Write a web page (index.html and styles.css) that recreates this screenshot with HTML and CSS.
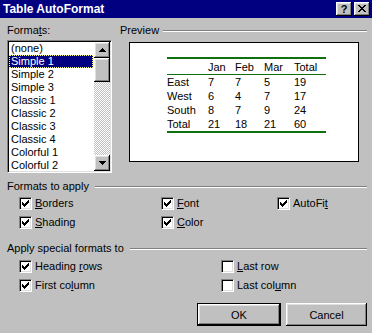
FILE: index.html
```html
<!DOCTYPE html>
<html lang="en">
<head>
  <meta charset="UTF-8">
  <title>Table AutoFormat</title>
  <link rel="stylesheet" href="styles.css">
</head>
<body>

  <div class="dialog">
    <div class="titlebar">
      <span class="title">Table AutoFormat</span>
      <div class="caption-btns">
        <span class="cbtn help">?</span>
        <span class="cbtn close">
          <svg width="8" height="7" viewBox="0 0 8 7"><path d="M0 0h2v1H0zM6 0h2v1H6zM1 1h2v1H1zM5 1h2v1H5zM2 2h4v1H2zM3 3h2v1H3zM2 4h4v1H2zM1 5h2v1H1zM5 5h2v1H5zM0 6h2v1H0zM6 6h2v1H6z"/></svg>
        </span>
      </div>
    </div>

    <div class="content">
      <div class="top">
        <div class="formats">
          <div class="label">Forma<u>t</u>s:</div>
          <div class="listbox">
            <ul class="items">
              <li>(none)</li>
              <li class="selected">Simple 1</li>
              <li>Simple 2</li>
              <li>Simple 3</li>
              <li>Classic 1</li>
              <li>Classic 2</li>
              <li>Classic 3</li>
              <li>Classic 4</li>
              <li>Colorful 1</li>
              <li>Colorful 2</li>
            </ul>
            <div class="scrollbar">
              <span class="sbtn"><svg width="7" height="4" viewBox="0 0 7 4"><path d="M3 0h1v1h1v1h1v1h1v1H0V3h1V2h1V1h1z"/></svg></span>
              <span class="thumb"></span>
              <span class="track"></span>
              <span class="sbtn"><svg width="7" height="4" viewBox="0 0 7 4"><path d="M0 0h7v1H6v1H5v1H4v1H3V3H2V2H1V1H0z"/></svg></span>
            </div>
          </div>
        </div>

        <div class="preview">
          <div class="group-title"><span>Preview</span><span class="etch"></span></div>
          <div class="preview-box">
            <table class="sample">
              <tr class="head"><td></td><td>Jan</td><td>Feb</td><td>Mar</td><td>Total</td></tr>
              <tr><td>East</td><td>7</td><td>7</td><td>5</td><td>19</td></tr>
              <tr><td>West</td><td>6</td><td>4</td><td>7</td><td>17</td></tr>
              <tr><td>South</td><td>8</td><td>7</td><td>9</td><td>24</td></tr>
              <tr><td>Total</td><td>21</td><td>18</td><td>21</td><td>60</td></tr>
            </table>
          </div>
        </div>
      </div>

      <div class="group">
        <div class="group-title"><span>Formats to apply</span><span class="etch"></span></div>
        <div class="checks apply">
          <label class="check"><span class="box on"></span><span><u>B</u>orders</span></label>
          <label class="check"><span class="box on"></span><span><u>F</u>ont</span></label>
          <label class="check"><span class="box on"></span><span>AutoFi<u>t</u></span></label>
          <label class="check"><span class="box on"></span><span><u>S</u>hading</span></label>
          <label class="check"><span class="box on"></span><span><u>C</u>olor</span></label>
        </div>
      </div>

      <div class="group special-group">
        <div class="group-title"><span>Apply special formats to</span><span class="etch"></span></div>
        <div class="checks special">
          <label class="check"><span class="box on"></span><span>Heading <u>r</u>ows</span></label>
          <label class="check"><span class="box"></span><span><u>L</u>ast row</span></label>
          <label class="check"><span class="box on"></span><span>First co<u>l</u>umn</span></label>
          <label class="check"><span class="box"></span><span>Last col<u>u</u>mn</span></label>
        </div>
      </div>

      <div class="buttons">
        <button class="btn default">OK</button>
        <button class="btn">Cancel</button>
      </div>
    </div>
  </div>

</body>
</html>
```

FILE: styles.css
```css
body {
  margin: 0;
  background: #c0c0c0;
  font-family: "Liberation Sans", Arial, sans-serif;
  font-size: 11px;
  color: #000;
}

.dialog {
  width: 372px;
  height: 333px;
  background: #c0c0c0;
  overflow: hidden;
}

/* title bar */
.titlebar {
  height: 18px;
  background: #000080;
  display: flex;
  align-items: center;
  padding-left: 3px;
  padding-right: 2px;
}

.title {
  color: #fff;
  font-weight: bold;
  font-size: 12px;
}

.caption-btns {
  margin-left: auto;
  display: flex;
  gap: 2px;
}

.cbtn,
.sbtn,
.thumb,
.btn {
  background: #c0c0c0;
  box-shadow: inset -1px -1px #000, inset 1px 1px #fff, inset -2px -2px #808080, inset 2px 2px #dfdfdf;
}

.cbtn {
  width: 16px;
  height: 14px;
  display: flex;
  align-items: center;
  justify-content: center;
  font-weight: bold;
  font-size: 11px;
  line-height: 14px;
}

.cbtn svg {
  display: block;
  margin-top: -1px;
}

/* content */
.content {
  padding: 6px 5px 0 7px;
}

.top {
  display: flex;
  gap: 8px;
}

.formats {
  width: 105px;
}

.label {
  height: 13px;
  line-height: 13px;
  margin-bottom: 3px;
}

.listbox {
  height: 133px;
  box-sizing: border-box;
  border: 1px solid;
  border-color: #808080 #fff #fff #808080;
  box-shadow: inset 1px 1px #000, inset -1px -1px #dfdfdf;
  padding: 1px;
  background: #fff;
  display: flex;
}

.items {
  list-style: none;
  margin: 0;
  padding: 0;
  flex: 1;
  overflow: hidden;
}

.items li {
  height: 13px;
  line-height: 13px;
  padding-left: 2px;
  white-space: nowrap;
}

.items li.selected {
  background: #000080;
  color: #fff;
  outline: 1px dotted #ffff80;
  outline-offset: -1px;
  margin-right: 1px;
}

.scrollbar {
  width: 16px;
  display: flex;
  flex-direction: column;
}

.sbtn {
  height: 16px;
  display: flex;
  align-items: center;
  justify-content: center;
}

.sbtn svg {
  display: block;
}

.thumb {
  height: 24px;
}

.track {
  flex: 1;
  background: repeating-conic-gradient(#c0c0c0 0 25%, #fff 0 50%) 0 0 / 2px 2px;
}

/* preview */
.preview {
  flex: 1;
}

.group-title {
  display: flex;
  align-items: center;
  height: 13px;
  line-height: 13px;
}

.etch {
  flex: 1;
  margin-left: 6px;
  border-top: 1px solid #808080;
  border-bottom: 1px solid #fff;
  margin-top: 1px;
}

.preview .etch {
  margin-left: 4px;
}

.preview-box {
  margin: 5px 0 0 9px;
  width: 230px;
  height: 120px;
  box-sizing: border-box;
  border: 1px solid #000;
  background: #fff;
  padding: 14px 0 0 37px;
}

.sample {
  border-collapse: collapse;
  border-top: 2px solid #107010;
  border-bottom: 2px solid #107010;
}

.sample td {
  padding: 0;
  height: 14px;
  line-height: 14px;
  width: 27px;
}

.sample td:first-child {
  width: 41px;
}

.sample td:nth-child(3) {
  width: 29px;
}

.sample td:nth-child(4) {
  width: 30px;
}

.sample td:nth-child(5) {
  width: 32px;
}

.sample tr.head td {
  height: 15px;
  border-bottom: 1px solid #107010;
}

/* check groups */
.group {
  margin-top: 7px;
}

.special-group {
  margin-top: 13px;
}

.checks {
  display: grid;
  row-gap: 6px;
  padding-left: 12px;
  margin-top: 4px;
}

.checks.apply {
  grid-template-columns: 142px 116px auto;
}

.checks.special {
  grid-template-columns: 202px auto;
  margin-top: 5px;
}

.check {
  display: flex;
  align-items: center;
  gap: 3px;
  height: 13px;
  line-height: 13px;
}

.box {
  width: 13px;
  height: 13px;
  box-sizing: border-box;
  border: 1px solid;
  border-color: #808080 #fff #fff #808080;
  box-shadow: inset 1px 1px #000, inset -1px -1px #dfdfdf;
  background: #fff;
}

.box.on {
  background: #fff url("data:image/svg+xml,%3Csvg xmlns='http://www.w3.org/2000/svg' width='7' height='7'%3E%3Cpath d='M0 2h1v3H0zM1 3h1v3H1zM2 4h1v3H2zM3 3h1v3H3zM4 2h1v3H4zM5 1h1v3H5zM6 0h1v3H6z'/%3E%3C/svg%3E") no-repeat 2px 2px;
}

/* buttons */
.buttons {
  display: flex;
  justify-content: flex-end;
  gap: 5px;
  margin-top: 11px;
}

.btn {
  width: 81px;
  height: 23px;
  border: 0;
  padding: 0;
  font-family: inherit;
  font-size: 11px;
  color: #000;
}

.btn.default {
  width: 84px;
  border: 1px solid #000;
}
```
